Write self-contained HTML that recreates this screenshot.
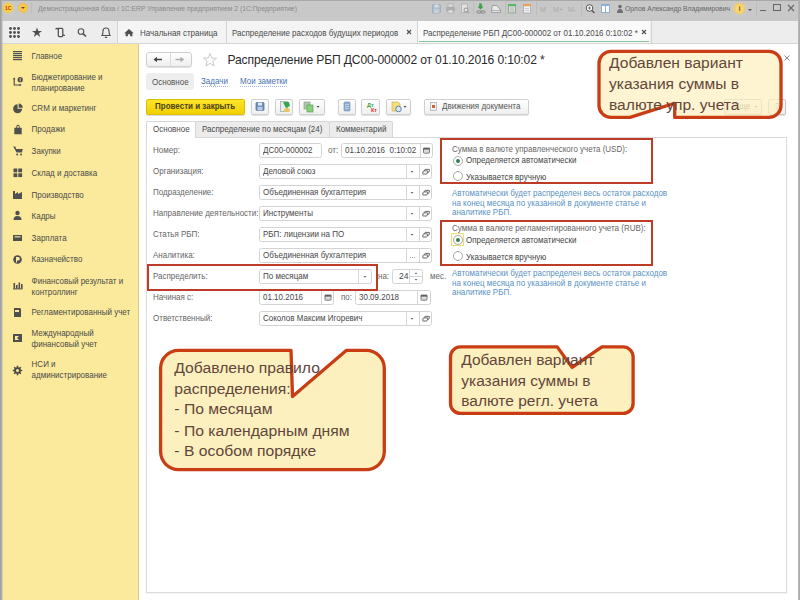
<!DOCTYPE html>
<html><head><meta charset="utf-8">
<style>
*{margin:0;padding:0;box-sizing:border-box}
html,body{width:800px;height:600px;overflow:hidden;background:#fff;font-family:"Liberation Sans",sans-serif;position:relative}
.a{position:absolute;white-space:nowrap}
#titlebar{left:0;top:0;width:800px;height:21px;background:#c8c8c8}
#tabbar{left:0;top:21px;width:800px;height:23px;background:#ededed;border-bottom:1px solid #d6d6d6}
#sidebar{left:0;top:44px;width:139px;height:556px;background:#fbea9b;border-right:1px solid #d9ca85}
.sb{left:31.6px;font-size:8px;color:#4a4a4a;line-height:8.6px;transform:scale(1,1.16);transform-origin:0 4.67px}
.lbl{left:153px;font-size:8px;color:#666;line-height:10px;transform:scale(1,1.16);transform-origin:0 54%}
.tx{transform:scale(1,1.16);transform-origin:0 54%}
.ft{display:inline-block;transform:scale(1,1.16);transform-origin:0 54%}
.fld{background:#fff;border:1px solid #d3d3d3;border-radius:2.5px;height:15px;font-size:8px;color:#474747;line-height:13px;padding-left:3px}
.dd{position:absolute;top:0;width:13px;height:13px;border-left:1px solid #d8d8d8}
.dd:after{content:"";position:absolute;left:5px;top:6px;border-left:2px solid transparent;border-right:2px solid transparent;border-top:2px solid #555}
.ob{background:#fff;border:1px solid #d2d2d2;border-radius:2px;width:13px;height:15px}
.btn{background:linear-gradient(#ffffff,#efefef);border:1px solid #cfcfcf;border-radius:2px;height:16px;box-shadow:0 1px 1px rgba(0,0,0,0.12)}
.redbox{border:2px solid #bd3c26}
.blue{left:452px;font-size:8px;color:#5a92c4;line-height:8.2px;transform:scale(1,1.16);transform-origin:0 4.5px}
.tabtxt{font-size:8px;color:#4a4a4a;transform:scale(1,1.16);transform-origin:0 54%}
.tb{top:0;height:21px}
</style></head><body>
<div id="titlebar" class="a"></div>

<!-- titlebar logo -->
<div class="a" style="left:3px;top:3px;width:10px;height:10px;border-radius:50%;background:radial-gradient(#fbe05a,#f2c230);box-shadow:0 0 2px #f7d860"></div>
<div class="a" style="left:5px;top:5px;font-size:5px;font-weight:bold;color:#d22a10">1С</div>
<div class="a" style="left:18px;top:3px;width:10px;height:10px;border-radius:50%;background:radial-gradient(#f9d060,#efb840)"></div>
<div class="a" style="left:21px;top:7px;border-left:2px solid transparent;border-right:2px solid transparent;border-top:2px solid #6a4a10"></div>
<div class="a" style="left:31px;top:2px;width:1px;height:11px;background:#bdbdbd"></div>
<div class="a tx" style="left:38px;top:4.8px;font-size:6.8px;color:#8a8a8a">Демонстрационная база / 1С:ERP Управление предприятием 2 (1С:Предприятие)</div>
<!-- titlebar icons -->
<svg class="a" style="left:420px;top:0" width="200" height="21">
 <g opacity="0.75">
 <rect x="12.5" y="4.5" width="8" height="8.5" rx="0.8" fill="#a8bcd2" stroke="#8aa0b8" stroke-width="0.8"/><rect x="14.5" y="4.5" width="4" height="3" fill="#dde6f0"/><rect x="14" y="9.5" width="5" height="3.5" fill="#c8d6e4"/>
 <rect x="26" y="7" width="9" height="4.5" rx="1" fill="#a8a8a8"/><rect x="28" y="4" width="5" height="3" fill="#e4e4e4" stroke="#9a9a9a" stroke-width="0.6"/><rect x="28" y="10" width="5" height="3" fill="#eee" stroke="#9a9a9a" stroke-width="0.6"/>
 <rect x="41.5" y="4" width="6" height="8.5" fill="#e8e8e8" stroke="#a0a0a0" stroke-width="0.7"/><circle cx="46" cy="10" r="2" fill="#f0f0f0" stroke="#7a7a7a" stroke-width="0.9"/><path d="M47.4,11.4 L49,13" stroke="#7a7a7a" stroke-width="1"/>
 </g>
 <rect x="53" y="2" width="1" height="13" fill="#bcbcbc"/>
 <path d="M60.5,9.5 L63.5,6.5 L61.8,6.5 L61.8,3.5 L59.2,3.5 L59.2,6.5 L57.5,6.5 Z" fill="#3aa040"/>
 <ellipse cx="59" cy="12" rx="2.3" ry="1.2" fill="none" stroke="#7a7a7a" stroke-width="0.8"/><ellipse cx="63" cy="12" rx="2.3" ry="1.2" fill="none" stroke="#7a7a7a" stroke-width="0.8"/>
 <path d="M72.5,5.5 L77,5.5 L80.5,10 L80.5,12.5 L71.5,12.5 L71.5,10 Z" fill="#e8e8e8" stroke="#8a8a8a" stroke-width="0.7"/><path d="M71.5,10.5 H80.5" stroke="#8a8a8a" stroke-width="0.6"/>
 <rect x="85" y="2" width="1" height="13" fill="#bcbcbc"/>
 <rect x="88.5" y="4.5" width="7" height="8.5" fill="#d6ddd6" stroke="#8a9a8a" stroke-width="0.8"/><rect x="88" y="4" width="8" height="2.2" fill="#58b868"/><path d="M91,7 V12.5 M93,7 V12.5" stroke="#9aa89a" stroke-width="0.6"/>
 <rect x="103.5" y="4.5" width="7" height="8.5" fill="#eef0f4" stroke="#a8a8b0" stroke-width="0.8"/><rect x="103" y="4" width="8" height="2.2" fill="#e8a060"/><path d="M105,8.5 H109 M105,10.5 H109" stroke="#b0b4c0" stroke-width="0.6"/>
 <rect x="116" y="2" width="1" height="13" fill="#bcbcbc"/>
 <text x="120" y="12" font-size="7" fill="#a8a8a8" font-family="Liberation Sans">M</text>
 <text x="133" y="12" font-size="7" fill="#a8a8a8" font-family="Liberation Sans">M+</text>
 <text x="148" y="12" font-size="7" fill="#a8a8a8" font-family="Liberation Sans">M-</text>
 <rect x="161" y="2" width="1" height="13" fill="#bcbcbc"/>
 <circle cx="169.5" cy="8" r="3.3" fill="#fafafa" stroke="#555" stroke-width="1"/><path d="M172,10.5 L174.5,13" stroke="#555" stroke-width="1.4"/><path d="M168,8 H171 M169.5,6.5 V9.5" stroke="#555" stroke-width="0.8"/>
 <rect x="181.5" y="4.5" width="8" height="8" fill="#fff" stroke="#8fb0d8"/><rect x="181" y="4" width="9" height="2" fill="#8fb0d8"/><rect x="185" y="4" width="1" height="9" fill="#8fb0d8"/>
</svg>
<svg class="a" style="left:616px;top:4px" width="10" height="10"><circle cx="4" cy="2.6" r="1.8" fill="#707070"/><path d="M1,9 Q1,5 4,5 Q7,5 7,9 Z" fill="#707070"/></svg>
<div class="a tx" style="left:625px;top:4.8px;font-size:6.8px;color:#666">Орлов Александр Владимирович</div>
<div class="a" style="left:734px;top:3px;width:11px;height:11px;border-radius:50%;background:radial-gradient(#fbe38a,#f1c050);box-shadow:0 0 2px #f5d880;text-align:center;font-size:8px;font-weight:bold;color:#8a6420;line-height:11px">i</div>
<div class="a" style="left:748px;top:9px;border-left:2.5px solid transparent;border-right:2.5px solid transparent;border-top:2.5px solid #555"></div>
<div class="a" style="left:756px;top:2px;width:1px;height:13px;background:#bcbcbc"></div>
<div class="a" style="left:760px;top:10px;width:6px;height:1px;background:#666"></div>
<div class="a" style="left:773px;top:4px;width:8px;height:7px;border:1px solid #666;border-top-width:1.5px"></div>
<svg class="a" style="left:786px;top:3px" width="10" height="10"><path d="M2,2 L8,8 M8,2 L2,8" stroke="#666" stroke-width="1.1"/></svg>

<!-- tab bar -->
<div id="tabbar" class="a"></div>
<div class="a" style="left:117px;top:21px;width:1px;height:22px;background:#d4d4d4"></div>
<div class="a" style="left:118px;top:21px;width:108px;height:22px;background:#f4f4f4"></div>
<div class="a" style="left:226px;top:21px;width:1px;height:22px;background:#d4d4d4"></div>
<div class="a" style="left:227px;top:21px;width:190px;height:22px;background:#f4f4f4"></div>
<div class="a" style="left:417px;top:21px;width:1px;height:22px;background:#d4d4d4"></div>
<div class="a" style="left:418px;top:21px;width:232px;height:22px;background:#fafafa"></div>
<div class="a" style="left:650.5px;top:21px;width:1px;height:22px;background:#d4d4d4"></div>
<div class="a" style="left:419px;top:40.5px;width:230px;height:1.5px;background:#86c49c"></div>
<svg class="a" style="left:0;top:21px" width="140" height="22">
 <g fill="#4f4f4f">
 <circle cx="10.5" cy="7.5" r="1.45"/><circle cx="14.5" cy="7.5" r="1.45"/><circle cx="18.5" cy="7.5" r="1.45"/>
 <circle cx="10.5" cy="11.5" r="1.45"/><circle cx="14.5" cy="11.5" r="1.45"/><circle cx="18.5" cy="11.5" r="1.45"/>
 <circle cx="10.5" cy="15.5" r="1.45"/><circle cx="14.5" cy="15.5" r="1.45"/><circle cx="18.5" cy="15.5" r="1.45"/>
 <path d="M37,6.5 L38.3,10 L42,10 L39,12.2 L40.2,16 L37,13.6 L33.8,16 L35,12.2 L32,10 L35.7,10 Z"/>
 <path d="M124.3,12.2 L129,8 L133.7,12.2 L132.4,12.2 L132.4,15.3 L130.1,15.3 L130.1,13.2 L127.9,13.2 L127.9,15.3 L125.6,15.3 L125.6,12.2 Z"/>
 </g>
 <g fill="none" stroke="#4f4f4f" stroke-width="1.1">
 <path d="M58.3,7.3 H61.8 Q62.8,7.3 62.8,8.3 V14.5 Q62.8,15.5 61.8,15.5 H59.3 Q58.3,15.5 58.3,14.5 Z M58.3,8.6 Q57.8,7.3 56.7,7.3 Q55.8,7.4 55.9,8.4 M62.8,13.3 Q63.4,14.6 64.9,14.4" stroke-width="1.25"/>
 <circle cx="81" cy="10.5" r="2.8"/><path d="M83,12.6 L86,15.5" stroke-width="1.6"/>
 <path d="M102,14.5 Q103,13 103,10 Q103,7 106,7 Q109,7 109,10 Q109,13 110,14.5 Z M105,16 Q106,17 107,16"/>
 </g>
</svg>
<div class="a tabtxt" style="left:140px;top:28.5px">Начальная страница</div>
<div class="a tabtxt" style="left:232px;top:28.5px">Распределение расходов будущих периодов</div>
<svg class="a" style="left:406px;top:29px" width="8" height="8"><path d="M1,1 L5,5 M5,1 L1,5" stroke="#505050" stroke-width="1.1"/></svg>
<div class="a tabtxt" style="left:423px;top:28.5px">Распределение РБП ДС00-000002 от 01.10.2016 0:10:02 *</div>
<svg class="a" style="left:641px;top:29px" width="8" height="8"><path d="M1,1 L5,5 M5,1 L1,5" stroke="#505050" stroke-width="1.1"/></svg>

<div id="sidebar" class="a"></div>
<!-- sidebar icons -->
<svg class="a" style="left:0;top:43px" width="30" height="350">
 <g fill="#505050">
 <rect x="13" y="8" width="9" height="1.2"/><rect x="13" y="10" width="9" height="1.2"/><rect x="13" y="12" width="9" height="1.2"/><rect x="13" y="14" width="9" height="1.2"/><rect x="13" y="16" width="9" height="1.2"/>
 <path d="M17.6,61.3 L17.6,65.8 L22.1,65.8 A4.5,4.5 0 1 1 17.6,61.3 Z"/><path d="M18.6,60.6 A4.2,4.2 0 0 1 22.8,64.8 L18.6,64.8 Z"/>
 <path d="M14.3,84.8 L21.7,84.8 L21.7,91.3 L14.3,91.3 Z M16.2,84.8 Q16.2,81.8 18,81.8 Q19.8,81.8 19.8,84.8 L18.9,84.8 Q18.9,82.7 18,82.7 Q17.1,82.7 17.1,84.8 Z"/>
 <path d="M13.2,103.6 L15.3,103.6 L16.2,106 L22.8,106 L21.9,109.6 L16.6,109.6 Z"/><circle cx="17.2" cy="111.5" r="1"/><circle cx="21" cy="111.5" r="1"/>
 <rect x="13.5" y="125.5" width="3.8" height="3.8"/><rect x="18.3" y="125.5" width="3.8" height="3.8"/><rect x="13.5" y="130.3" width="3.8" height="3.8"/><rect x="18.3" y="130.3" width="3.8" height="3.8"/>
 <path d="M13,156 L13,148 L15,148 L15,151 L18,149 L18,151 L22,149 L22,156 Z"/>
 <circle cx="17.5" cy="170" r="2.2"/><path d="M13.5,177 Q13.5,173 17.5,173 Q21.5,173 21.5,177 Z"/>
 <rect x="13" y="192" width="9" height="6"/>
 <circle cx="17.5" cy="216.5" r="4.3"/>
 <rect x="13.5" y="240" width="1.6" height="5.5"/><rect x="16" y="242" width="1.6" height="3.5"/><rect x="18.5" y="239.5" width="1.6" height="6"/><rect x="21" y="241" width="1.6" height="4.5"/><rect x="13" y="245.3" width="9.6" height="1.1"/>
 <path d="M14,265 L20,265 L21,266 L21,274 L14,274 Z"/>
 <rect x="13" y="291" width="9" height="8"/>
 <circle cx="17.5" cy="327.5" r="3.3"/>
 </g>
 <g fill="#fbea9b">
 <rect x="14.5" y="193.3" width="6" height="1.1"/>
 <path d="M16,214 L18.5,214 Q19.8,214 19.8,215.8 Q19.8,217.5 18.5,217.5 L17,217.5 L17,219.5 L16,219.5 Z"/>
 <rect x="15" y="267" width="4" height="2"/>
 <path d="M15,293 L19,293 L17,295 L19,297 L15,297 Z"/>
 <circle cx="17.5" cy="327.5" r="1.6"/>
 
 </g>
 <g stroke="#4a4a4a" stroke-width="1.1" fill="none">
 <path d="M17.5,322.8 L17.5,332.2 M12.8,327.5 L22.2,327.5 M14.2,324.2 L20.8,330.8 M20.8,324.2 L14.2,330.8" stroke-width="1.6"/>
 <circle cx="17.5" cy="327.5" r="1.5" fill="#fbea9b" stroke="none"/>
 <path d="M14.2,35 L14.2,42 L20.5,42"/>
 <path d="M12.9,36.2 L14.2,34.4 L15.5,36.2 Z M19.6,40.7 L21.6,42 L19.6,43.3 Z" fill="#4a4a4a" stroke="none"/>
 <circle cx="20.2" cy="36.7" r="2.6" fill="#4a4a4a" stroke="none"/>
 <rect x="19.7" y="35" width="1" height="3.4" fill="#d8cc90" stroke="none"/>
 </g>
</svg>
<div class="a sb" style="top:52.7px">Главное</div>
<div class="a sb" style="top:73.7px">Бюджетирование и<br>планирование</div>
<div class="a sb" style="top:104.7px">CRM и маркетинг</div>
<div class="a sb" style="top:125.7px">Продажи</div>
<div class="a sb" style="top:147.7px">Закупки</div>
<div class="a sb" style="top:169.7px">Склад и доставка</div>
<div class="a sb" style="top:191.7px">Производство</div>
<div class="a sb" style="top:212.7px">Кадры</div>
<div class="a sb" style="top:234.7px">Зарплата</div>
<div class="a sb" style="top:255.7px">Казначейство</div>
<div class="a sb" style="top:277.7px">Финансовый результат и<br>контроллинг</div>
<div class="a sb" style="top:308.7px">Регламентированный учет</div>
<div class="a sb" style="top:329.7px">Международный<br>финансовый учет</div>
<div class="a sb" style="top:360.7px">НСИ и<br>администрирование</div>

<!-- form header -->
<div class="a btn" style="left:146px;top:51.5px;width:46px;height:15px;border-radius:3px"></div>
<div class="a" style="left:169.5px;top:52.5px;width:1px;height:13px;background:#dcdcdc"></div>
<svg class="a" style="left:146px;top:51.5px" width="46" height="15">
 <path d="M10.5,7.5 L16,7.5" stroke="#444" stroke-width="1.5"/><path d="M7.5,7.5 L11,4.8 L11,10.2 Z" fill="#444"/>
 <path d="M29.5,7.5 L35,7.5" stroke="#a8a8a8" stroke-width="1.3"/><path d="M38,7.5 L34.5,4.8 L34.5,10.2 Z" fill="#a8a8a8"/>
</svg>
<svg class="a" style="left:202px;top:52px" width="16" height="16"><path d="M8,1.5 L9.8,6 L14.5,6.2 L10.8,9.2 L12,14 L8,11.3 L4,14 L5.2,9.2 L1.5,6.2 L6.2,6 Z" fill="none" stroke="#c4c4c4" stroke-width="0.9"/></svg>
<div class="a" style="left:227.5px;top:53px;font-size:12.1px;letter-spacing:-0.145px;color:#2a2a2a">Распределение РБП ДС00-000002 от 01.10.2016 0:10:02 *</div>
<svg class="a" style="left:783px;top:54px" width="9" height="9"><path d="M1.5,1.5 L6.5,6.5 M6.5,1.5 L1.5,6.5" stroke="#8a8a8a" stroke-width="1"/></svg>

<div class="a" style="left:146px;top:73px;width:48px;height:17px;background:#eeeeee;border-radius:3px"></div>
<div class="a tx" style="left:152px;top:77.8px;font-size:8px;color:#505050">Основное</div>
<div class="a tx" style="left:201px;top:77.8px;font-size:8px;color:#4672b0;line-height:8.4px">Задачи</div><div class="a" style="left:201px;top:86.2px;width:27px;border-top:1px dotted #9ab6dc"></div>
<div class="a tx" style="left:240px;top:77.8px;font-size:8px;color:#4672b0;line-height:8.4px">Мои заметки</div><div class="a" style="left:240px;top:86.2px;width:47px;border-top:1px dotted #9ab6dc"></div>

<!-- command bar -->
<div class="a" style="left:146px;top:99px;width:99px;height:16px;border-radius:2px;background:linear-gradient(#fde52a,#f2cf00);border:1px solid #dcc000;box-shadow:0 1px 1px rgba(0,0,0,0.15)"></div>
<div class="a tx" style="left:155px;top:102px;font-size:8px;font-weight:bold;color:#4a4418;letter-spacing:0px">Провести и закрыть</div>
<div class="a btn" style="left:251px;top:99px;width:18px"></div>
<div class="a btn" style="left:275px;top:99px;width:18px"></div>
<div class="a btn" style="left:299px;top:99px;width:26px"></div>
<div class="a btn" style="left:338px;top:99px;width:18px"></div>
<div class="a btn" style="left:361px;top:99px;width:19px"></div>
<div class="a btn" style="left:386px;top:99px;width:25px"></div>
<div class="a btn" style="left:424px;top:99px;width:105px"></div>
<div class="a tx" style="left:442px;top:102px;font-size:8px;color:#555">Движения документа</div>
<div class="a btn" style="left:724px;top:99px;width:38px;border-color:#c4c4c4"></div>
<div class="a tx" style="left:734px;top:102px;font-size:8px;color:#777">Еще</div>
<div class="a btn" style="left:768px;top:99px;width:18px;border-color:#c4c4c4"></div>
<div class="a tx" style="left:775px;top:102px;font-size:8px;color:#777">?</div>
<svg class="a" style="left:240px;top:98px" width="560" height="18">
 <rect x="16" y="4.5" width="8" height="8" rx="1" fill="#6f93bf" stroke="#4d6f9a" stroke-width="0.8"/><rect x="18" y="4.5" width="4" height="3" fill="#dfe8f2"/><rect x="17.5" y="9" width="5" height="3.5" fill="#b9cce2"/>
 <rect x="40.5" y="3.5" width="7" height="10" fill="#e7eaee" stroke="#9aa4b0" stroke-width="0.7"/><path d="M43,4 L49,4 L50,8 L46,10 Z" fill="#32a84a"/><ellipse cx="47" cy="12" rx="3" ry="2" fill="#e8c75a"/>
 <rect x="64" y="4" width="6" height="7" fill="#b0c8b0" stroke="#7a9a7a" stroke-width="0.6"/><rect x="67" y="7" width="6" height="7" fill="#8ccf80" stroke="#4a9a40" stroke-width="0.6"/>
 <path d="M76.5,8 L79.5,8 L78,9.8 Z" fill="#444"/>
 <rect x="104" y="4" width="6" height="9" rx="1" fill="#8fb0cf" stroke="#6d8fae" stroke-width="0.6"/><path d="M105,6.5 H109 M105,8.5 H109 M105,10.5 H109" stroke="#d8e4f0" stroke-width="0.6"/>
 <text x="127" y="9" font-size="5.5" font-weight="bold" fill="#3a9a3a" font-family="Liberation Sans">Дт</text><text x="131" y="14" font-size="5.5" font-weight="bold" fill="#e03030" font-family="Liberation Sans">Кт</text>
 <path d="M152,4 L158,4 L160,6 L160,13 L152,13 Z" fill="#f4dd7a" stroke="#c8a840" stroke-width="0.6"/><circle cx="158.5" cy="11" r="2.8" fill="#dbe6f2" stroke="#4f7cb0" stroke-width="0.9"/>
 <path d="M163.5,8 L166.5,8 L165,9.8 Z" fill="#444"/>
 <rect x="190.5" y="4.5" width="6" height="8" fill="#f2f2f2" stroke="#999" stroke-width="0.6"/><rect x="192" y="7" width="3" height="3" fill="#d0603a"/>
 <path d="M514.5,8 L517.5,8 L516,9.8 Z" fill="#777"/>
</svg>

<!-- tabs -->
<div class="a" style="left:146px;top:121px;width:50px;height:17px;background:#fff;border:1px solid #d6d6d6;border-bottom:none;border-radius:2px 2px 0 0"></div>
<div class="a" style="left:195px;top:121px;width:135px;height:17px;background:#ececec;border:1px solid #d6d6d6;border-radius:2px 2px 0 0"></div>
<div class="a" style="left:329px;top:121px;width:64px;height:17px;background:#ececec;border:1px solid #d6d6d6;border-radius:2px 2px 0 0"></div>
<div class="a tx" style="left:153px;top:125px;font-size:8px;color:#4a4a4a">Основное</div>
<div class="a tx" style="left:202px;top:125px;font-size:8px;color:#4a4a4a">Распределение по месяцам (24)</div>
<div class="a tx" style="left:336px;top:125px;font-size:8px;color:#4a4a4a">Комментарий</div>

<!-- content frame -->
<div class="a" style="left:146px;top:137px;width:641px;height:456px;border:1px solid #dcdcdc;border-top:none;box-shadow:0 1px 1px rgba(0,0,0,0.05)"></div>
<div class="a" style="left:329px;top:137px;width:458px;height:1px;background:#d8d8d8"></div>
<div class="a" style="left:195px;top:137px;width:135px;height:1px;background:#d8d8d8"></div>

<!-- labels -->
<div class="a lbl" style="top:146px">Номер:</div>
<div class="a lbl" style="top:167px">Организация:</div>
<div class="a lbl" style="top:188px">Подразделение:</div>
<div class="a lbl" style="top:209px">Направление деятельности:</div>
<div class="a lbl" style="top:230px">Статья РБП:</div>
<div class="a lbl" style="top:251px">Аналитика:</div>
<div class="a lbl" style="top:272px">Распределить:</div>
<div class="a lbl" style="top:293px">Начиная с:</div>
<div class="a lbl" style="top:314px">Ответственный:</div>

<!-- fields -->
<div class="a fld" style="left:259px;top:143px;width:63px"><span class="ft">ДС00-000002</span></div>
<div class="a lbl" style="left:328px;top:146px">от:</div>
<div class="a fld" style="left:341px;top:143px;width:92px"><span class="ft">01.10.2016&nbsp; 0:10:02</span></div>
<div class="a fld" style="left:259px;top:164px;width:173px"><span class="ft">Деловой союз</span></div>
<div class="a fld" style="left:259px;top:185px;width:173px"><span class="ft">Объединенная бухгалтерия</span></div>
<div class="a fld" style="left:259px;top:206px;width:173px"><span class="ft">Инструменты</span></div>
<div class="a fld" style="left:259px;top:227px;width:173px"><span class="ft">РБП: лицензии на ПО</span></div>
<div class="a fld" style="left:259px;top:248px;width:173px"><span class="ft">Объединенная бухгалтерия</span></div>
<div class="a fld" style="left:259px;top:269px;width:113px"><span class="ft">По месяцам</span></div>
<div class="a lbl" style="left:378px;top:272px">на:</div>
<div class="a fld" style="left:392px;top:269px;width:31px;text-align:right;padding-right:13.5px;font-size:8.6px"><span class="ft">24</span></div>
<div class="a lbl" style="left:430px;top:272px">мес.</div>
<div class="a fld" style="left:259px;top:290px;width:75px"><span class="ft">01.10.2016</span></div>
<div class="a lbl" style="left:341px;top:293px">по:</div>
<div class="a fld" style="left:355px;top:290px;width:76px"><span class="ft">30.09.2018</span></div>
<div class="a fld" style="left:259px;top:311px;width:173px"><span class="ft">Соколов Максим Игоревич</span></div>
<svg class="a" style="left:0;top:0" width="800" height="600">
 <g stroke="#d6d6d6" stroke-width="1">
  <path d="M420.5,144 V157 M406.5,165 V178 M419.5,165 V178 M406.5,186 V199 M419.5,186 V199 M406.5,207 V220 M419.5,207 V220 M406.5,228 V241 M419.5,228 V241 M406.5,249 V262 M419.5,249 V262 M358.5,270 V283 M409.5,270 V283 M410,276.5 H422 M321.5,291 V304 M417.5,291 V304 M406.5,312 V325 M419.5,312 V325"/>
 </g>
 <g fill="#6a6a6a">
  <path d="M410.5,171 H413.5 L412,172.8 Z M410.5,192 H413.5 L412,193.8 Z M410.5,213 H413.5 L412,214.8 Z M410.5,234 H413.5 L412,235.8 Z M410.5,318 H413.5 L412,319.8 Z M363.5,276 H366.5 L365,277.8 Z"/>
  <path d="M414.5,274 H417.5 L416,272.5 Z M414.5,279 H417.5 L416,280.5 Z"/>
  <rect x="410" y="257" width="1" height="1" fill="#999"/><rect x="412" y="257" width="1" height="1" fill="#999"/><rect x="414" y="257" width="1" height="1" fill="#999"/>
 </g>
 <g fill="#dcdcdc" stroke="#707070" stroke-width="0.9">
  <rect x="423.5" y="148.2" width="6" height="5" rx="0.8"/><rect x="325" y="295.2" width="6" height="5" rx="0.8"/><rect x="421" y="295.2" width="6" height="5" rx="0.8"/>
 </g>
 <g fill="#606060">
  <rect x="423.2" y="147.8" width="6.6" height="1.8"/><rect x="324.7" y="294.8" width="6.6" height="1.8"/><rect x="420.7" y="294.8" width="6.6" height="1.8"/>
 </g>
 <g fill="none" stroke="#666" stroke-width="0.9">
  <path d="M425.2,169.4 H429.2 Q429.6,169.4 429.5,169.8 L428.9,172 Q428.8,172.4 428.4,172.4 H427.4 M423.6,170.9 H427.4 Q427.8,170.9 427.7,171.3 L427.1,173.6 Q427,174 426.6,174 H423 Q422.6,174 422.7,173.6 L423.2,171.3 Q423.3,170.9 423.6,170.9 Z M424.4,170.9 L424.8,169.8 Q424.9,169.4 425.2,169.4" stroke-width="1"/><path d="M 425.2,190.4 H 429.2 Q 429.6,190.4 429.5,190.8 L 428.9,193 Q 428.8,193.4 428.4,193.4 H 427.4 M 423.6,191.9 H 427.4 Q 427.8,191.9 427.7,192.3 L 427.1,194.6 Q 427,195 426.6,195 H 423 Q 422.6,195 422.7,194.6 L 423.2,192.3 Q 423.3,191.9 423.6,191.9 Z M 424.4,191.9 L 424.8,190.8 Q 424.9,190.4 425.2,190.4" stroke-width="1"/><path d="M 425.2,211.4 H 429.2 Q 429.6,211.4 429.5,211.8 L 428.9,214 Q 428.8,214.4 428.4,214.4 H 427.4 M 423.6,212.9 H 427.4 Q 427.8,212.9 427.7,213.3 L 427.1,215.6 Q 427,216 426.6,216 H 423 Q 422.6,216 422.7,215.6 L 423.2,213.3 Q 423.3,212.9 423.6,212.9 Z M 424.4,212.9 L 424.8,211.8 Q 424.9,211.4 425.2,211.4" stroke-width="1"/><path d="M 425.2,232.4 H 429.2 Q 429.6,232.4 429.5,232.8 L 428.9,235 Q 428.8,235.4 428.4,235.4 H 427.4 M 423.6,233.9 H 427.4 Q 427.8,233.9 427.7,234.3 L 427.1,236.6 Q 427,237 426.6,237 H 423 Q 422.6,237 422.7,236.6 L 423.2,234.3 Q 423.3,233.9 423.6,233.9 Z M 424.4,233.9 L 424.8,232.8 Q 424.9,232.4 425.2,232.4" stroke-width="1"/><path d="M 425.2,253.4 H 429.2 Q 429.6,253.4 429.5,253.8 L 428.9,256 Q 428.8,256.4 428.4,256.4 H 427.4 M 423.6,254.9 H 427.4 Q 427.8,254.9 427.7,255.3 L 427.1,257.6 Q 427,258 426.6,258 H 423 Q 422.6,258 422.7,257.6 L 423.2,255.3 Q 423.3,254.9 423.6,254.9 Z M 424.4,254.9 L 424.8,253.8 Q 424.9,253.4 425.2,253.4" stroke-width="1"/><path d="M 425.2,316.4 H 429.2 Q 429.6,316.4 429.5,316.8 L 428.9,319 Q 428.8,319.4 428.4,319.4 H 427.4 M 423.6,317.9 H 427.4 Q 427.8,317.9 427.7,318.3 L 427.1,320.6 Q 427,321 426.6,321 H 423 Q 422.6,321 422.7,320.6 L 423.2,318.3 Q 423.3,317.9 423.6,317.9 Z M 424.4,317.9 L 424.8,316.8 Q 424.9,316.4 425.2,316.4" stroke-width="1"/>
  
 </g>
</svg>

<!-- radio groups -->
<div class="a tx" style="left:452px;top:144.7px;font-size:8px;color:#666">Сумма в валюте управленческого учета (USD):</div>
<div class="a" style="left:452.5px;top:155.5px;width:10px;height:10px;border-radius:50%;border:1px solid #aaa;background:#fff"></div>
<div class="a" style="left:455.5px;top:158.5px;width:4px;height:4px;border-radius:50%;background:#2f8054"></div>
<div class="a tx" style="left:466px;top:156.2px;font-size:8px;color:#444">Определяется автоматически</div>
<div class="a" style="left:452.5px;top:171px;width:10px;height:10px;border-radius:50%;border:1px solid #aaa;background:#fff"></div>
<div class="a tx" style="left:466px;top:172.7px;font-size:8px;color:#444">Указывается вручную</div>
<div class="a blue" style="top:190px">Автоматически будет распределен весь остаток расходов<br>на конец месяца по указанной в документе статье и<br>аналитике РБП.</div>

<div class="a tx" style="left:452px;top:223.7px;font-size:8px;color:#666">Сумма в валюте регламентированного учета (RUB):</div>
<div class="a" style="left:450.5px;top:233px;width:13px;height:13px;border:1px solid #f0dc80;background:#fffbe6"></div>
<div class="a" style="left:452.5px;top:235px;width:10px;height:10px;border-radius:50%;border:1px solid #aaa;background:#fff"></div>
<div class="a" style="left:455.5px;top:238px;width:4px;height:4px;border-radius:50%;background:#2f8054"></div>
<div class="a tx" style="left:466px;top:236px;font-size:8px;color:#444">Определяется автоматически</div>
<div class="a" style="left:452.5px;top:251px;width:10px;height:10px;border-radius:50%;border:1px solid #aaa;background:#fff"></div>
<div class="a tx" style="left:466px;top:252.5px;font-size:8px;color:#444">Указывается вручную</div>
<div class="a blue" style="top:269.5px">Автоматически будет распределен весь остаток расходов<br>на конец месяца по указанной в документе статье и<br>аналитике РБП.</div>

<!-- red boxes -->
<div class="a redbox" style="left:440px;top:138px;width:213px;height:46px"></div>
<div class="a redbox" style="left:440px;top:220px;width:213px;height:45.5px"></div>
<div class="a redbox" style="left:147px;top:264px;width:231px;height:27px"></div>

<div class="a" style="left:0;top:0;width:800px;height:1px;background:#a8a8a8"></div>
<div class="a" style="left:0;top:0;width:3px;height:600px;background:linear-gradient(90deg,#999,#b5b5b5 60%,rgba(200,200,200,0.3))"></div>
<div class="a" style="left:797.5px;top:0;width:2.5px;height:600px;background:linear-gradient(90deg,#c4c4c4,#a8a8a8 50%,#b0b0b0)"></div>
<!-- callouts -->
<svg class="a" style="left:0;top:0" width="800" height="600">
 <path d="M611,51.3 H769 A12,12 0 0 1 781,63.3 V105.4 A12,12 0 0 1 769,117.4 H674.7 V103.3 L630,117.4 H611 A12,12 0 0 1 599,105.4 V63.3 A12,12 0 0 1 611,51.3 Z" fill="#fdf0bf" fill-opacity="0.72" stroke="#c93d14" stroke-width="3.3" stroke-linejoin="round"/>
 <path d="M178.6,350.3 H291 L292.5,396.5 L346.5,350.3 H366.3 A18,18 0 0 1 384.3,368.3 V451.6 A18,18 0 0 1 366.3,469.6 H178.6 A18,18 0 0 1 160.6,451.6 V368.3 A18,18 0 0 1 178.6,350.3 Z" fill="#fdf0bf" stroke="#c93d14" stroke-width="3.3" stroke-linejoin="round"/>
 <path d="M460.5,346.9 H557.2 L572.1,367.4 L601.9,346.9 H623.1 A10,10 0 0 1 633.1,356.9 V403.4 A10,10 0 0 1 623.1,413.4 H460.5 A10,10 0 0 1 450.5,403.4 V356.9 A10,10 0 0 1 460.5,346.9 Z" fill="#fdf0bf" stroke="#c93d14" stroke-width="3.3" stroke-linejoin="round"/>
</svg>
<div id="c1" class="a" style="left:609px;top:50.9px;font-size:15.6px;line-height:23.04px;transform:scaleY(0.92);transform-origin:0 16.93px;color:#62463a">Добавлен вариант<br>указания суммы в<br>валюте упр. учета</div>
<div id="c2" class="a" style="left:174.3px;top:357.3px;font-size:15.7px;line-height:22.6px;transform:scaleY(0.92);transform-origin:0 16.74px;color:#62463a">Добавлено правило<br>распределения:<br>- По месяцам<br>- По календарным дням<br>- В особом порядке</div>
<div id="c3" class="a" style="left:461.3px;top:349.2px;font-size:15.5px;line-height:22.66px;transform:scaleY(0.92);transform-origin:0 16.71px;color:#62463a">Добавлен вариант<br>указания суммы в<br>валюте регл. учета</div>
</body></html>
